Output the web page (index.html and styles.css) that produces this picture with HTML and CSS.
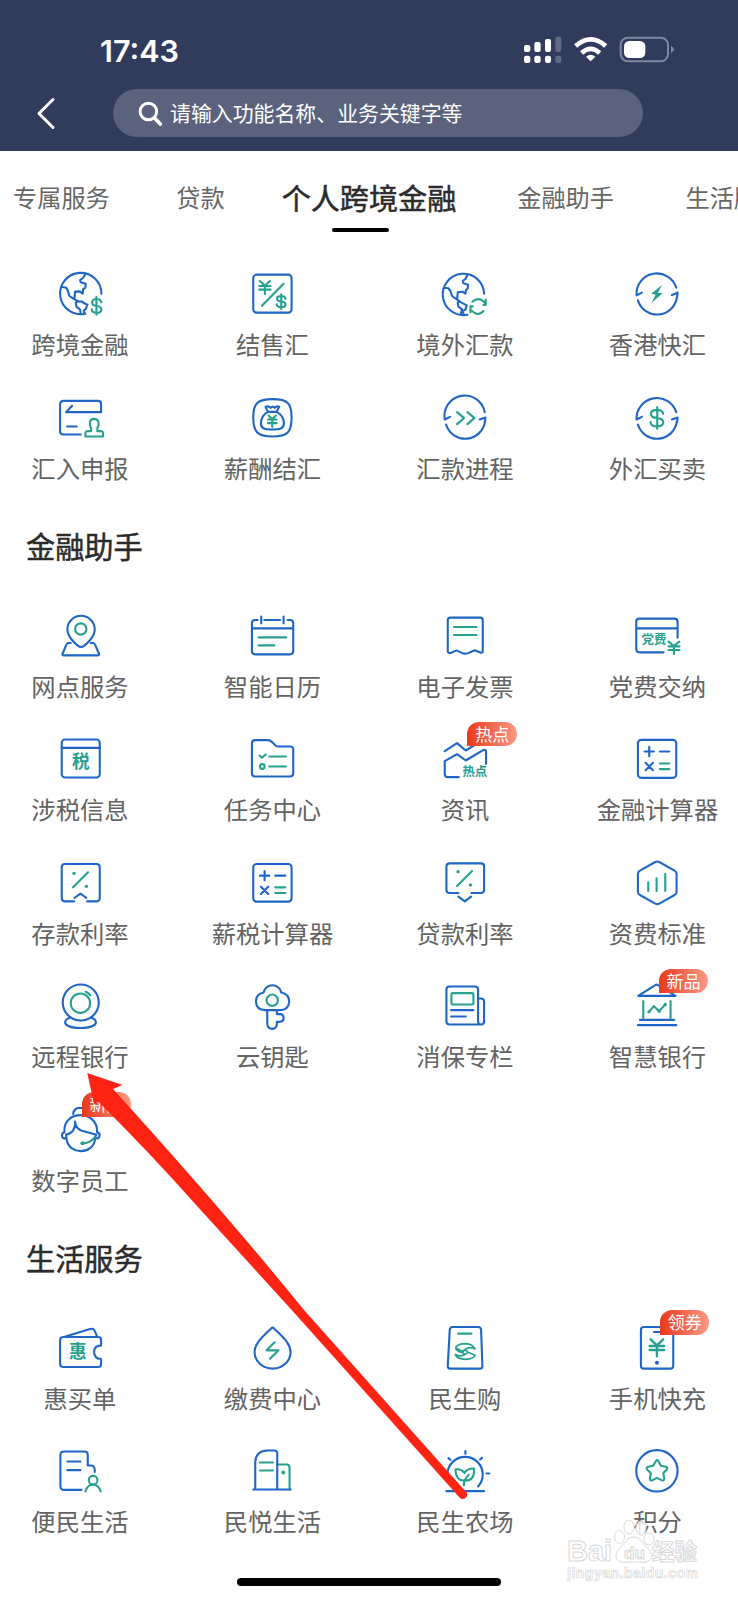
FILE: index.html
```html
<!DOCTYPE html>
<html lang="zh-CN">
<head>
<meta charset="utf-8">
<title>个人跨境金融</title>
<link rel="stylesheet" href="styles.css">
</head>
<body>
<div class="screen">
<header class="header">
  <div class="status">
    <span class="time">17:43</span>
    <svg class="status-icons" width="180" height="60" viewBox="0 0 540 180">
      <g fill="#fff"><rect x="42" y="75" width="19" height="21" rx="6"/><rect x="73" y="66" width="19" height="30" rx="6"/><rect x="105" y="57" width="18" height="39" rx="6"/><rect x="42" y="107" width="19" height="22" rx="7"/><rect x="73" y="107" width="19" height="22" rx="7"/><rect x="105" y="107" width="18" height="22" rx="7"/></g>
      <g fill="#626a86"><rect x="136" y="50" width="18" height="46" rx="6"/><rect x="136" y="107" width="18" height="22" rx="6"/></g>
      <path d="M197 78Q242 38 287 78M215 99Q242 74 269 99" fill="none" stroke="#fff" stroke-width="14"/>
      <path d="M228 110Q242 98 256 110L242 124Z" fill="#fff"/>
      <rect x="332" y="53" width="142" height="71" rx="22" fill="none" stroke="#7f87a0" stroke-width="6"/>
      <path d="M483 78Q492 82 492 88T483 100Z" fill="#7f87a0"/>
      <rect x="342" y="63" width="64" height="51" rx="16" fill="#fff"/>
    </svg>
  </div>
  <div class="search-row">
    <svg class="back" width="20" height="34" viewBox="0 0 20 34"><path d="M17 3.500L3 17.500L17 31.500" fill="none" stroke="#fff" stroke-width="3" stroke-linecap="round" stroke-linejoin="round"/></svg>
    <div class="search">
      <svg width="25" height="25" viewBox="0 0 25 25"><circle cx="10.4" cy="10.5" r="8.3" fill="none" stroke="#fff" stroke-width="2.9"/><path d="M16.5 17L22.3 23" stroke="#fff" stroke-width="3.6" stroke-linecap="round"/></svg>
      <span>请输入功能名称、业务关键字等</span>
    </div>
  </div>
</header>
<nav class="tabs">
  <span class="tab">专属服务</span><span class="tab">贷款</span><span class="tab active">个人跨境金融</span><span class="tab">金融助手</span><span class="tab last">生活服务</span>
</nav>

<section class="grid">
  <div class="item"><svg class="icon" viewBox="150.75 42 180 180"><path d="M305 131A62 62 0 1 0 257 191M257 72L250 84L241 90L243 97L258 101L257 113L250 118L249 131L240 124L226 125L224 148L209 138L204 121L199 113L188 111M224 148L236 154L247 155L253 160L263 164L258 177L252 182L254 191M228 158L230 170L241 179L243 192M228 158L236 153"/><path class="g" d="M305 157Q303 147 290 147Q277 148 277 158Q278 167 290 168Q305 169 305 179Q304 189 290 189Q276 188 276 178M290 141V194"/></svg><span class="label">跨境金融</span></div>
  <div class="item"><svg class="icon" viewBox="728.25 42 180 180"><rect x="762" y="74" width="115" height="114" rx="10"/><path class="g" d="M853 101L788 167M782 93L797 107L812 93M780 108H814M780 119H814M797 107V132M859 146Q857 138 846 138Q833 138 833 146Q834 154 846 155Q859 156 859 164Q858 172 846 172Q832 171 832 163M846 133V177"/></svg><span class="label">结售汇</span></div>
  <div class="item"><svg class="icon" viewBox="201.75 42 180 180"><path d="M349 131A62 62 0 1 0 299 194M299 74L294 86L285 93L287 100L301 104L300 115L295 120L293 131L284 125L270 127L268 149L253 138L248 123L242 115L231 113M268 149L280 157L297 166L293 179L285 183L288 194M270 158L272 170L283 178L279 192M270 158L276 154"/><path class="g" d="M314 155Q331 141 346 153L354 162M354 149V165H347M308 187V169H315M312 182Q330 202 347 183"/></svg><span class="label">境外汇款</span></div>
  <div class="item"><svg class="icon" viewBox="779.25 42 180 180"><path d="M927 113A61 61 0 0 0 808 136L824 128M931 128L914 135M931 128A62 62 0 0 1 929 143M812 151A60 60 0 0 0 929 141"/><path class="gf" d="M884 105L852 131L865 134L853 158L886 130L872 128Z"/></svg><span class="label">香港快汇</span></div>
  <div class="item"><svg class="icon" viewBox="150.75 412.5 180 180"><path d="M217 466L199 485H304V460Q304 451 295 451H192Q181 451 181 462V542Q181 552 191 552H243M202 528H231"/><path class="g" d="M257 558H310V548Q310 543 304 542H293V532Q299 523 296 513Q291 505 283 505Q274 505 271 513Q268 523 274 532V542H263Q257 543 257 548Z"/></svg><span class="label">汇入申报</span></div>
  <div class="item"><svg class="icon" viewBox="728.25 412.5 180 180"><path d="M820 446C865 446 877 458 877 501C877 545 865 558 820 558C775 558 762 545 762 501C762 458 775 446 820 446ZM806 484L799 469Q808 465 814 472Q820 465 826 472Q832 465 840 469L832 484ZM806 484C793 491 785 504 785 519C785 535 798 537 819 537C840 537 854 535 854 519C854 504 846 491 832 484"/><path class="g" d="M808 495L819 506L830 495M806 507H832M806 518H832M819 507V529"/></svg><span class="label">薪酬结汇</span></div>
  <div class="item"><svg class="icon" viewBox="201.75 412.5 180 180"><path d="M351 485A61 61 0 0 0 231 507L247 499M353 501L336 507M353 501A62 62 0 0 1 351 515M235 522A60 60 0 0 0 352 512"/><path class="g" d="M268 485L289 503L268 521M299 485L320 503L299 521"/></svg><span class="label">汇款进程</span></div>
  <div class="item"><svg class="icon" viewBox="779.25 412.5 180 180"><path d="M927 485A61 61 0 0 0 808 507L824 499M931 501L914 507M931 501A62 62 0 0 1 929 515M812 522A60 60 0 0 0 929 512"/><path class="g" d="M888 490Q886 478 870 478Q851 478 851 490Q852 502 869 502Q888 504 888 516Q887 528 869 528Q850 527 850 515M870 470V535"/></svg><span class="label">外汇买卖</span></div>
</section>

<h2 class="heading">金融助手</h2>
<section class="grid">
  <div class="item"><svg class="icon" viewBox="150.75 318 180 180"><path d="M244 441Q235 441 217 420Q203 404 203 388A41 41 0 0 1 285 388Q285 404 271 420Q253 441 244 441ZM213 429H206Q202 429 200 434L188 462Q187 466 192 466H294Q299 466 298 462L286 434Q284 429 280 429H273"/><circle class="g" cx="243" cy="387" r="17"/></svg><span class="label">网点服务</span></div>
  <div class="item"><svg class="icon" viewBox="728.25 318 180 180"><path d="M775 360H768Q758 360 758 370V453Q758 463 768 463H872Q882 463 882 453V370Q882 360 872 360H865M795 360H843M786 350V370M853 350V370M758 385H882"/><path class="g" d="M778 412H861M778 436H825"/></svg><span class="label">智能日历</span></div>
  <div class="item"><svg class="icon" viewBox="201.75 48 180 180"><path d="M248 83H337Q345 83 345 91V182Q345 191 336 187L321 181L307 187Q292 195 279 187L266 181L249 189Q240 191 240 182V91Q240 83 248 83Z"/><path class="g" d="M259 111H326M259 135H326"/></svg><span class="label">电子发票</span></div>
  <div class="item"><svg class="icon" viewBox="779.25 48 180 180"><path d="M931 143V95Q931 86 921 86H816Q807 86 807 95V177Q807 187 817 187H889M807 115H931"/><path class="g" d="M904 155L920 168L936 155M904 169H937M904 180H937M920 168V192"/><text x="823" y="163" font-size="37">党费</text></svg><span class="label">党费交纳</span></div>
  <div class="item"><svg class="icon" viewBox="150.75 688.5 180 180"><rect x="186" y="720" width="114" height="114" rx="10"/><path d="M186 745H300"/><text x="217" y="805" font-size="53">税</text></svg><span class="label">涉税信息</span></div>
  <div class="item"><svg class="icon" viewBox="728.25 688.5 180 180"><path d="M768 722H806Q813 722 819 728L828 737Q832 741 838 741H873Q882 741 882 750V821Q882 831 872 831H768Q758 831 758 821V732Q758 722 768 722Z"/><path class="g" d="M781 768L788 775L799 765M810 771H860M810 801H860"/><circle class="g" cx="789" cy="801" r="7"/></svg><span class="label">任务中心</span></div>
  <div class="item"><svg class="icon" viewBox="201.75 418.5 180 180"><path d="M231 485L268 461L294 483L330 461M355 523V486Q354 479 346 482L294 513L268 494L231 515V554Q231 563 241 563H273"/><text x="284" y="560" font-size="37">热点</text></svg><span class="badge b33">热点</span><span class="label">资讯</span></div>
  <div class="item"><svg class="icon" viewBox="779.25 418.5 180 180"><rect x="812" y="451" width="115" height="114" rx="10"/><path d="M832 486H860M846 472V500M878 486H906M835 520L857 542M857 520L835 542"/><path class="g" d="M878 522H906M878 539H906"/></svg><span class="label">金融计算器</span></div>
  <div class="item"><svg class="icon" viewBox="150.75 39 180 180"><path d="M223 184H195Q186 184 186 174V81Q186 72 195 72H290Q300 72 300 81V174Q300 184 290 184H262M224 174L242 161L260 174"/><path class="g" d="M265 97L220 142"/><circle class="gf" cx="223" cy="100" r="5"/><circle class="gf" cx="260" cy="139" r="5"/></svg><span class="label">存款利率</span></div>
  <div class="item"><svg class="icon" viewBox="728.25 39 180 180"><rect x="762" y="72" width="115" height="113" rx="10"/><path d="M782 107H810M796 93V121M828 107H858M785 140L807 162M807 140L785 162"/><path class="g" d="M828 142H858M828 159H858"/></svg><span class="label">薪税计算器</span></div>
  <div class="item"><svg class="icon" viewBox="201.75 39 180 180"><path d="M272 159H246Q236 159 236 149V79Q236 70 246 70H340Q349 70 349 79V149Q349 159 339 159H311M272 170L291 184L310 170"/><path class="g" d="M313 93L268 138"/><circle class="gf" cx="271" cy="95" r="5"/><circle class="gf" cx="308" cy="135" r="5"/></svg><span class="label">贷款利率</span></div>
  <div class="item"><svg class="icon" viewBox="779.25 39 180 180"><path d="M864 66Q870 63 876 66L922 92Q928 95 928 102V155Q928 162 922 165L876 191Q870 194 864 191L818 165Q812 162 812 155V102Q812 95 818 92Z"/><path class="g" d="M843 127V153M868 115V153M894 102V153"/></svg><span class="label">资费标准</span></div>
  <div class="item"><svg class="icon" viewBox="150.75 409.5 180 180"><circle cx="243" cy="489" r="54"/><path d="M213 534C194 538 192 552 203 558C221 568 265 568 281 558C293 552 290 538 273 534"/><circle class="g" cx="242" cy="491" r="29"/><path class="g" d="M258 457Q267 461 272 468"/></svg><span class="label">远程银行</span></div>
  <div class="item"><svg class="icon" viewBox="728.25 409.5 180 180"><path d="M793 459A27 27 0 0 1 846 459Q869 463 870 486Q868 512 842 512H798Q771 511 770 486Q771 463 793 459ZM804 512V553Q806 568 819 568Q832 567 833 553V547H842Q854 545 853 536Q853 523 841 524H833V512"/><circle class="g" cx="819" cy="482" r="17"/></svg><span class="label">云钥匙</span></div>
  <div class="item"><svg class="icon" viewBox="201.75 409.5 180 180"><path d="M339 555H246Q236 555 236 545V450Q236 441 246 441H321Q331 441 331 450V545Q331 555 340 555Q349 555 349 545V485Q349 477 339 477H331M250 512H317M250 531H294"/><rect class="g" x="251" y="461" width="66" height="34" rx="4"/></svg><span class="label">消保专栏</span></div>
  <div class="item"><svg class="icon" viewBox="779.25 409.5 180 180"><path d="M813 469H925L872 437Q868 434 864 437ZM818 541H921M812 557H927"/><path class="g" d="M828 485V536M910 485V536M845 517L860 500L876 515L894 495"/><circle class="gf" cx="845" cy="517" r="5"/><circle class="gf" cx="876" cy="515" r="5"/><circle class="gf" cx="894" cy="495" r="5"/></svg><span class="badge b31">新品</span><span class="label">智慧银行</span></div>
  <div class="item"><svg class="icon" viewBox="150.75 90 180 180"><path d="M194 187C188 118 295 118 292 187M220 132Q223 111 246 114Q263 115 266 132M194 186Q185 190 187 199Q190 208 200 204M292 186Q302 190 299 199Q297 208 287 204M199 194L201 210C209 255 279 255 286 208L288 195M199 194Q228 188 226 155Q227 175 246 182Q269 188 290 194"/><path class="g" d="M285 202Q270 220 249 220"/><circle class="gf" cx="248" cy="220" r="6"/></svg><span class="badge b32">新品</span><span class="label">数字员工</span></div>
</section>

<h2 class="heading">生活服务</h2>
<section class="grid">
  <div class="item"><svg class="icon" viewBox="150.75 54 180 180"><path d="M191 111H297Q304 112 304 120V136Q283 137 283 156Q283 176 304 177V193Q304 201 295 201H191Q181 201 181 191V121Q181 111 191 111ZM195 110L271 87Q280 84 284 91L292 109"/><text x="208" y="173" font-size="53">惠</text></svg><span class="label">惠买单</span></div>
  <div class="item"><svg class="icon" viewBox="728.25 54 180 180"><path d="M815 86Q820 80 825 86C850 111 874 130 874 156A54 50 0 0 1 766 156C766 130 790 111 815 86Z"/><path class="g" d="M826 127L802 151H838L812 176"/></svg><span class="label">缴费中心</span></div>
  <div class="item"><svg class="icon" viewBox="201.75 54 180 180"><path d="M254 81H332Q339 81 340 89L344 199Q344 206 337 206H247Q240 206 240 199L246 89Q247 81 254 81Z"/><path class="g" d="M271 101H311"/><path class="g s" d="M320 144Q312 131 291 131Q264 133 264 145Q265 152 284 158L292 163L301 157L322 166Q318 177 293 178Q270 177 263 165M263 163Q277 172 290 164M322 147Q306 138 292 148L283 154L265 145M284 158L292 148L301 157"/></svg><span class="label">民生购</span></div>
  <div class="item"><svg class="icon" viewBox="779.25 54 180 180"><rect x="821" y="81" width="97" height="125" rx="9"/><path d="M860 96H878"/><circle class="bf" cx="869" cy="188" r="6"/><path class="g w" d="M850 118L869 136L888 118M847 138H891M847 150H891M869 136V169"/></svg><span class="badge b33">领券</span><span class="label">手机快充</span></div>
  <div class="item"><svg class="icon" viewBox="150.75 424.5 180 180"><path d="M245 571H193Q182 571 182 560V466Q182 456 193 456H254Q264 456 264 466V498H276Q286 500 285 517M203 486H242M203 512H242"/><circle class="g" cx="280" cy="542" r="13"/><path class="g" d="M257 576Q263 555 280 555Q296 555 303 576"/></svg><span class="label">便民生活</span></div>
  <div class="item"><svg class="icon" viewBox="728.25 424.5 180 180"><path class="g" d="M834 495H862Q871 495 871 505V570M782 489H821M782 513H821"/><circle class="gf" cx="852" cy="519" r="6"/><path d="M762 570H874M768 570V486Q771 453 805 453H825Q834 453 834 462V570"/></svg><span class="label">民悦生活</span></div>
  <div class="item"><svg class="icon" viewBox="201.75 424.5 180 180"><path d="M331 561A53 53 0 1 0 253 561M236 575H349M293 455V463M242 476L248 481M343 475L337 480M356 522H365"/><path class="g" d="M288 558L290 543Q265 545 263 510Q279 506 290 520Q299 506 319 507Q321 546 290 543M290 543L303 525"/></svg><span class="label">民生农场</span></div>
  <div class="item"><svg class="icon" viewBox="779.25 424.5 180 180"><circle cx="869" cy="514" r="62"/><path class="g" d="M865 486Q870 478 874 486L881 499L896 502Q903 505 898 511L888 521L891 536Q891 546 883 542L869 535L856 542Q847 545 848 536L851 521L840 511Q835 504 843 502L858 499Z"/></svg><span class="label">积分</span></div>
</section>

<div class="home-bar"></div>

<svg class="arrow" width="738" height="1600" viewBox="0 0 738 1600"><path fill="#ff2314" d="M87.3 1073L122.5 1085L113 1089Q222 1209 304 1310L467 1493A4.5 4.5 0 0 1 460 1498L291.7 1310L197 1206Q150 1153 98.7 1102L94 1104Z"/></svg>

<svg class="watermark" width="150" height="70" viewBox="0 0 150 70">
  <g fill="#fff" fill-opacity=".8" stroke="#d9d9d9" stroke-width="1">
    <text class="wm-latin" x="5" y="41" font-size="29" textLength="45">Bai</text>
    <ellipse cx="57.500" cy="17" rx="5" ry="6.500"/><ellipse cx="67" cy="7" rx="5" ry="7"/><ellipse cx="79" cy="8" rx="5" ry="7"/><ellipse cx="87" cy="19" rx="5" ry="6"/>
    <path d="M72 17C79 17 82 25 87 30C94 38 87 44 77 42H66C56 44 50 37 57 29C62 24 65 17 72 17Z"/>
    <text class="wm-latin" x="62" y="39" font-size="17">du</text>
    <text class="wm-cjk" x="90" y="40" font-size="22.500">经验</text>
    <text class="wm-latin thin" x="5" y="58" font-size="14" textLength="131">jingyan.baidu.com</text>
  </g>
</svg>
</div>
</body>
</html>
```
FILE: styles.css
```css
* { box-sizing: border-box; }

body {
  margin: 0;
  background: #fff;
  font-family: "Noto Sans CJK SC", sans-serif;
  overflow: hidden;
}

.screen {
  position: relative;
  width: 738px;
  height: 1600px;
  overflow: hidden;
}

.header {
  height: 151px;
  background: #313b5c;
}

.status {
  display: flex;
  justify-content: space-between;
  height: 88px;
  padding: 20px 48px 0 100px;
}

.time {
  color: #fff;
  font: 600 30.5px/61px Inter, sans-serif;
}

.search-row {
  display: flex;
  align-items: center;
  height: 50px;
  padding-left: 36px;
}

.search {
  display: flex;
  align-items: center;
  gap: 7px;
  width: 530px;
  height: 48px;
  margin-left: 57px;
  padding-left: 25px;
  border-radius: 24px;
  background: #5a627d;
  color: #fff;
  font-size: 20.9px;
  line-height: 46px;
}

.search span { height: 48px; }

.tabs {
  display: flex;
  height: 113px;
  padding-left: 13px;
  color: #666;
  font-size: 24.2px;
  line-height: 92px;
  white-space: nowrap;
}

.tab { flex: none; margin-right: 66.5px; }

.tab.active {
  display: flex;
  flex-direction: column;
  align-items: center;
  height: 81px;
  margin: 0 61px 0 -9.5px;
  color: #2b2b2b;
  font-size: 29.1px;
  line-height: 93px;
  -webkit-text-stroke: .5px #2b2b2b;
}

.tab.active::after {
  content: "";
  flex: none;
  width: 57px;
  height: 4px;
  margin: -16px 17px 0 0;
  border-radius: 2px;
  background: #000;
}

.tab.last { margin-left: 5px; }

.grid {
  display: grid;
  grid-template-columns: repeat(4, 192.5px);
  grid-auto-rows: 123.5px;
  margin-left: -16.3px;
}

.item {
  position: relative;
  display: flex;
  flex-direction: column;
  align-items: center;
  gap: 4px;
}

.icon {
  width: 60px;
  height: 60px;
  fill: none;
  stroke: #1f66c6;
  stroke-width: 6.3;
  stroke-linecap: round;
  stroke-linejoin: round;
}

.icon .g { stroke: #26a08f; }
.icon .w { stroke-width: 7; }
.icon .s { stroke-width: 5; }
.icon .gf { fill: #26a08f; stroke: none; }
.icon .bf { fill: #1f66c6; stroke: none; }
.icon text { fill: #26a08f; stroke: none; font-weight: 700; }

.label {
  color: #636363;
  font-size: 24.3px;
  line-height: 32px;
  white-space: nowrap;
}

.badge {
  position: absolute;
  top: -7.5px;
  width: 49.5px;
  height: 24.5px;
  border-radius: 12px 12px 12px 0;
  background: linear-gradient(90deg, #e9391a, #fb9a86);
  color: #fff;
  font-size: 17px;
  line-height: 23px;
  text-align: center;
}

.b31 { left: 97.5px; }
.b32 { left: 98px; }
.b33 { left: 98.7px; }

.heading {
  height: 94.7px;
  margin: 0;
  padding: 14px 0 0 26px;
  color: #2b2b2b;
  font-size: 29.2px;
  font-weight: 400;
  line-height: 40px;
  -webkit-text-stroke: .5px #2b2b2b;
}

.home-bar {
  position: absolute;
  left: 237px;
  bottom: 14px;
  width: 264px;
  height: 8px;
  border-radius: 4px;
  background: #000;
}

.arrow {
  position: absolute;
  left: 0;
  top: 0;
}

.watermark {
  position: absolute;
  left: 562px;
  top: 1520px;
}

.wm-latin { font-family: "Liberation Sans", sans-serif; font-weight: 700; }
.wm-latin.thin { stroke-width: .7; }
.wm-cjk { font-weight: 700; }
```
